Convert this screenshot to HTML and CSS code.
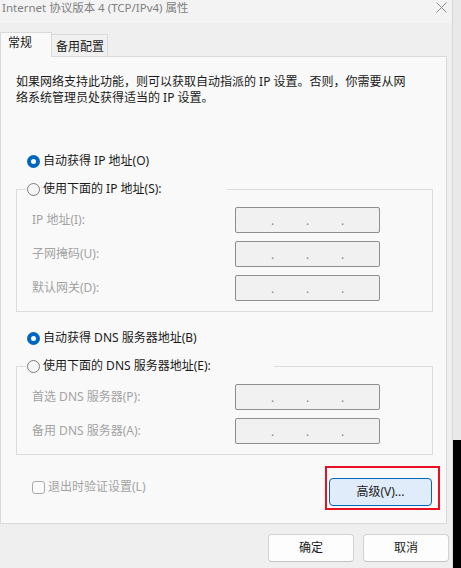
FILE: index.html
```html
<!DOCTYPE html>
<html lang="zh-CN">
<head>
<meta charset="utf-8">
<title>Internet 协议版本 4 (TCP/IPv4) 属性</title>
<link rel="stylesheet" href="styles.css">
</head>
<body>
<div class="screen">
  <div class="window">
    <div class="titlebar">
      <span class="title">Internet 协议版本 4 (TCP/IPv4) 属性</span>
      <svg class="close" width="11" height="11" viewBox="0 0 11 11"><path d="M0.5 0.5 L10.5 10.5 M10.5 0.5 L0.5 10.5" stroke="#8a8a8a" stroke-width="1" fill="none"/></svg>
    </div>
    <div class="tabs">
      <div class="tab active">常规</div>
      <div class="tab">备用配置</div>
    </div>
    <div class="panel">
      <p class="intro">如果网络支持此功能，则可以获取自动指派的 IP 设置。否则，你需要从网<br>络系统管理员处获得适当的 IP 设置。</p>

      <div class="option first"><span class="radio on"></span><span>自动获得 IP 地址(O)</span></div>
      <fieldset class="group">
        <legend class="legend legend-ip"><span class="legend-row"><span class="radio"></span><span>使用下面的 IP 地址(S):</span></span></legend>
        <div class="fields">
          <span class="label">IP 地址(I):</span>
          <div class="ipbox"><span>.</span><span>.</span><span>.</span></div>
          <span class="label">子网掩码(U):</span>
          <div class="ipbox"><span>.</span><span>.</span><span>.</span></div>
          <span class="label">默认网关(D):</span>
          <div class="ipbox"><span>.</span><span>.</span><span>.</span></div>
        </div>
      </fieldset>

      <div class="option dns"><span class="radio on"></span><span>自动获得 DNS 服务器地址(B)</span></div>
      <fieldset class="group">
        <legend class="legend legend-dns"><span class="legend-row"><span class="radio"></span><span>使用下面的 DNS 服务器地址(E):</span></span></legend>
        <div class="fields">
          <span class="label">首选 DNS 服务器(P):</span>
          <div class="ipbox"><span>.</span><span>.</span><span>.</span></div>
          <span class="label">备用 DNS 服务器(A):</span>
          <div class="ipbox"><span>.</span><span>.</span><span>.</span></div>
        </div>
      </fieldset>

      <div class="bottom">
        <div class="check"><span class="checkbox"></span><span>退出时验证设置(L)</span></div>
        <div class="highlight"><button class="btn adv">高级(V)...</button></div>
      </div>
    </div>
    <div class="footer">
      <button class="btn action">确定</button>
      <button class="btn action">取消</button>
    </div>
  </div>
  <div class="edge"><div class="edge-top"></div><div class="edge-bottom"></div></div>
</div>
</body>
</html>
```
FILE: styles.css
```css
* { box-sizing: border-box; }
html, body { margin: 0; padding: 0; }
body {
  font-family: "Noto Sans", "Noto Sans CJK SC", sans-serif;
  font-size: 12px;
  line-height: 16px;
  color: #1a1a1a;
  background: #efefef;
  width: 461px;
  height: 568px;
  overflow: hidden;
}
.screen { display: flex; height: 568px; }
.window {
  width: 453px;
  height: 568px;
  background: #efefef;
  border-right: 1px solid #d8d8d8;
  display: flex;
  flex-direction: column;
}
.edge { width: 8px; display: flex; flex-direction: column; }
.edge-top { height: 440px; background: #e9e9e9; }
.edge-bottom { flex: 1; background: #000; }

.titlebar {
  height: 23px;
  flex: none;
  background: #f3f3f3;
  display: flex;
  justify-content: space-between;
  align-items: flex-start;
  padding: 0 5px 0 2px;
}
.title { color: #808080; font-size: 11.5px; line-height: 16px; white-space: nowrap; }
.close { margin-top: 2px; }

.tabs {
  display: flex;
  align-items: flex-end;
  margin-top: 9px;
  margin-bottom: -1px;
  position: relative;
  z-index: 1;
}
.tab {
  border: 1px solid #dadada;
  border-bottom: none;
  white-space: nowrap;
}
.tab.active {
  width: 52px;
  background: #f9f9f9;
  padding: 2px 0 6px 7px;
}
.tab:not(.active) {
  width: 56px;
  border-left: none;
  background: #f0f0f0;
  padding: 4px 0 1px 4px;
  margin-bottom: 1px;
}

.panel {
  width: 447px;
  background: #f9f9f9;
  border: 1px solid #dadada;
  padding: 0 13px 13px 15px;
}
.intro {
  margin: 17px 0 0 0;
  white-space: nowrap;
}

.option {
  display: flex;
  align-items: center;
  gap: 3px;
  height: 20px;
  margin-left: 11px;
}
.option.first { margin-top: 45px; }
.option.dns { margin-top: 16px; }

.radio {
  width: 13px;
  height: 13px;
  border-radius: 50%;
  border: 1px solid #7c7c7c;
  background: #f6f6f6;
  flex: none;
}
.radio.on {
  border: 4px solid #0067c0;
  background: #ffffff;
}

.group {
  margin: 8px 0 0 0;
  min-width: 0;
  border: 1px solid #dcdcdc;
  padding: 0 0 10px 15px;
}
.legend {
  padding: 0 0 0 1px;
  margin-left: -6px;
  height: 20px;
}
.legend-ip { width: 201px; }
.legend-dns { width: 248px; }
.legend-row {
  display: flex;
  align-items: center;
  gap: 3px;
  height: 20px;
  white-space: nowrap;
}

.fields {
  display: grid;
  grid-template-columns: 203px 145px;
  grid-auto-rows: 26px;
  row-gap: 8px;
  margin-top: 8px;
  align-items: center;
}
.label { color: #a3a3a3; white-space: nowrap; }
.ipbox {
  height: 26px;
  border: 1px solid #8e8e8e;
  border-radius: 2px;
  background: #f1f1f1;
  display: flex;
  padding-left: 19px;
  align-items: center;
  color: #8a8a8a;
}
.ipbox span {
  width: 35px;
  text-align: center;
  line-height: 16px;
  padding-top: 1px;
}

.bottom {
  display: flex;
  justify-content: space-between;
  align-items: center;
  margin-top: 11px;
  margin-right: -7px;
}
.check {
  display: flex;
  align-items: center;
  gap: 3px;
  margin-left: 16px;
  margin-top: -2px;
  color: #a3a3a3;
  white-space: nowrap;
}
.checkbox {
  width: 13px;
  height: 13px;
  border: 1px solid #a9a9a9;
  border-radius: 3px;
  background: #fbfbfb;
}
.highlight {
  border: 2px solid #e81123;
  padding: 10px 6px 2px 2px;
}

.btn {
  font-family: inherit;
  font-size: 12px;
  line-height: 16px;
  color: #1a1a1a;
  border-radius: 4px;
  padding: 0;
  height: 28px;
}
.adv {
  display: block;
  width: 103px;
  background: #e0ecf9;
  border: 1px solid #0067c0;
}
.footer {
  display: flex;
  justify-content: flex-end;
  gap: 9px;
  padding: 10px 3px 0 0;
}
.action {
  width: 86px;
  background: #fdfdfd;
  border: 1px solid #d2d2d2;
  border-bottom-color: #c4c4c4;
}
```
